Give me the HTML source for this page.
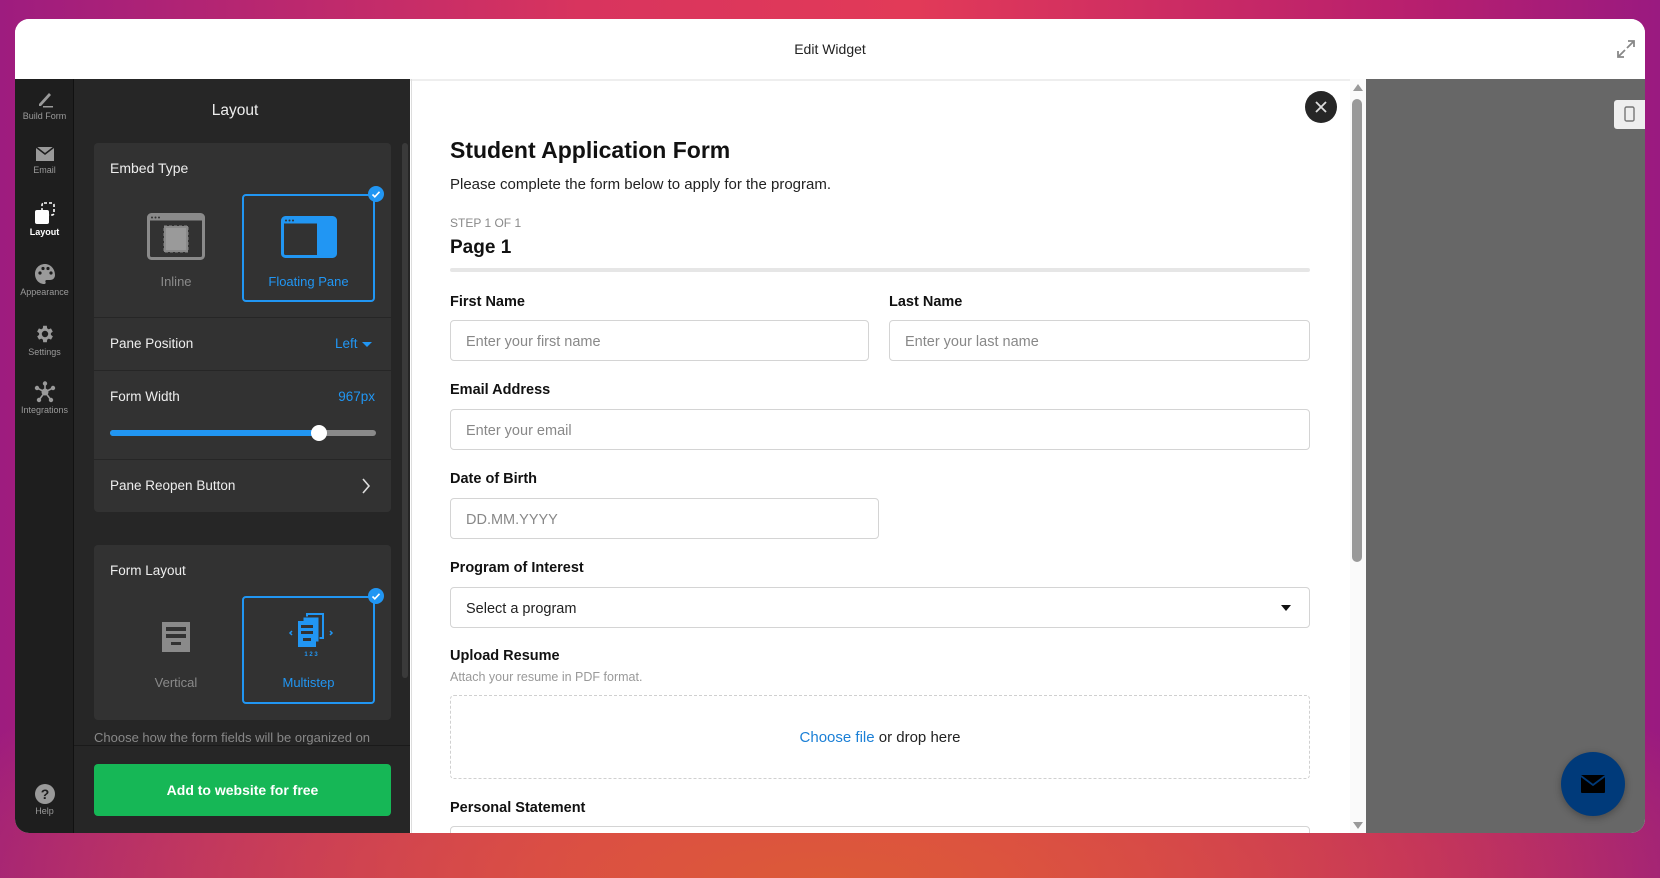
<!DOCTYPE html>
<html><head><meta charset="utf-8"><style>
*{box-sizing:border-box;margin:0;padding:0}
html,body{width:1660px;height:878px;overflow:hidden}
body{font-family:"Liberation Sans",sans-serif;position:relative;
background:radial-gradient(ellipse 60% 30% at 50% 100%,#dc5a38 0%,rgba(220,80,60,0) 100%),linear-gradient(90deg,#9e1c7f 0%,#d8345e 35%,#e23a58 55%,#b81f6e 85%,#9a1a80 100%)}
.a{position:absolute}
.win{left:15px;top:19px;width:1630px;height:814px;border-radius:14px;overflow:hidden;background:#fff}
.hdr{left:0;top:0;width:1630px;height:60px;background:#fff;text-align:center;line-height:60px;font-size:14px;color:#222}
.side{left:15px;top:79px;width:59px;height:754px;background:#1e1e1e;border-right:1px solid #111;border-bottom-left-radius:14px}
.si{position:absolute;left:0;width:59px;text-align:center;font-size:9px;color:#9a9a9a}
.panel{left:74px;top:79px;width:336px;height:754px;background:#262626}
.card{position:absolute;left:20px;width:297px;background:#323232;border-radius:4px}
.t{position:absolute;color:#eee;font-size:14px}
.opt{position:absolute;border:2px solid #2196f3;border-radius:4px}
.chk{position:absolute;width:16px;height:16px;border-radius:50%;background:#2196f3}
.div{position:absolute;left:0;width:297px;height:1px;background:#262626}
.form{left:410px;top:79px;width:956px;height:754px;background:#fff;overflow:hidden}
.lbl{position:absolute;font-weight:bold;font-size:14.5px;color:#111}
.inp{position:absolute;height:41px;border:1px solid #d4d4d4;border-radius:4px;font-size:14.5px;color:#888;padding-left:15px;line-height:43px}
</style></head><body>
<div class="a win">
 <div class="a hdr">Edit Widget</div>
 <svg class="a" style="left:1599px;top:18px" width="24" height="24" viewBox="0 0 24 24" fill="none" stroke="#888" stroke-width="1.8"><path d="M14 4h6v6M20 4l-7 7M10 20H4v-6M4 20l7-7"/></svg>
</div>
<div class="a side">
 <div class="si" style="top:10px"><svg width="20" height="20" viewBox="0 0 20 20"><path d="M4 15l10-11 2 2-10 11H4z" fill="#9a9a9a"/><rect x="8" y="17" width="10" height="1.5" fill="#9a9a9a"/></svg><div style="margin-top:0">Build Form</div></div>
 <div class="si" style="top:66px"><svg width="20" height="18" viewBox="0 0 20 18"><rect x="1" y="2" width="18" height="14" fill="#9a9a9a"/><path d="M1 2l9 7 9-7" stroke="#1e1e1e" stroke-width="1.6" fill="none"/></svg><div>Email</div></div>
 <div class="si" style="top:122px;color:#fff;font-weight:bold"><svg width="26" height="26" viewBox="0 0 26 26"><rect x="10" y="2" width="12" height="12" rx="2" fill="none" stroke="#fff" stroke-width="1.6" stroke-dasharray="3 2"/><rect x="3" y="9" width="14" height="14" rx="2" fill="#fff"/></svg><div style="margin-top:-2px">Layout</div></div>
 <div class="si" style="top:184px"><svg width="22" height="22" viewBox="0 0 22 22"><path d="M11 1C5 1 1 5.5 1 11s4 10 9 10c1.5 0 2-1 1.5-2s0-2 1.5-2h3c3 0 5-2 5-5 0-6-4.5-11-10-11z" fill="#9a9a9a"/><circle cx="6" cy="10" r="1.6" fill="#1e1e1e"/><circle cx="9" cy="5.5" r="1.6" fill="#1e1e1e"/><circle cx="14" cy="5.5" r="1.6" fill="#1e1e1e"/><circle cx="17" cy="10" r="1.6" fill="#1e1e1e"/></svg><div>Appearance</div></div>
 <div class="si" style="top:244px"><svg width="22" height="22" viewBox="0 0 24 24"><path fill="#9a9a9a" d="M19.4 13a7.5 7.5 0 000-2l2.1-1.6-2-3.5-2.5 1a7 7 0 00-1.700-1L15 3h-4l-.4 2.9a7 7 0 00-1.7 1l-2.5-1-2 3.5L6.6 11a7.5 7.5 0 000 2l-2.1 1.6 2 3.5 2.5-1a7 7 0 001.7 1L11 21h4l.4-2.9a7 7 0 001.7-1l2.5 1 2-3.5zM13 15.5A3.5 3.5 0 1113 8.5a3.5 3.5 0 010 7z" transform="translate(-1 0)"/></svg><div>Settings</div></div>
 <div class="si" style="top:302px"><svg width="22" height="22" viewBox="0 0 22 22" fill="#9a9a9a"><circle cx="11" cy="11" r="3.5"/><circle cx="11" cy="2.5" r="2.2"/><circle cx="3" cy="7" r="2.2"/><circle cx="19" cy="7" r="2.2"/><circle cx="5" cy="19" r="2.2"/><circle cx="17" cy="19" r="2.2"/><path d="M11 2.5V11M3 7l8 4M19 7l-8 4M5 19l6-8M17 19l-6-8" stroke="#9a9a9a" stroke-width="1.6"/></svg><div>Integrations</div></div>
 <div class="si" style="top:705px"><svg width="20" height="20" viewBox="0 0 20 20"><circle cx="10" cy="10" r="10" fill="#9a9a9a"/><text x="10" y="15" text-anchor="middle" font-size="14" font-weight="bold" fill="#1e1e1e" font-family="Liberation Sans">?</text></svg><div>Help</div></div>
</div>
<div class="a panel">
 <div class="t" style="left:0;width:322px;text-align:center;top:23px;font-size:15.5px">Layout</div>
 <div class="a" style="left:328px;top:64px;width:6px;height:535px;background:#3a3a3a;border-radius:3px"></div>
 <div class="card" style="top:64px;height:369px">
  <div class="t" style="left:16px;top:17px">Embed Type</div>
  <svg class="a" style="left:53px;top:70px" width="58" height="47" viewBox="0 0 58 47"><rect x="1.5" y="1.5" width="55" height="44" rx="3" fill="none" stroke="#8a8a8a" stroke-width="3"/><rect x="1.5" y="1.5" width="55" height="6" fill="#8a8a8a"/><circle cx="5" cy="4.5" r="1" fill="#323232"/><circle cx="8.5" cy="4.5" r="1" fill="#323232"/><circle cx="12" cy="4.5" r="1" fill="#323232"/><rect x="17" y="13" width="24" height="26" fill="#8a8a8a" stroke="#8a8a8a" stroke-dasharray="3 2"/><rect x="19" y="15" width="20" height="22" fill="#9a9a9a"/></svg>
  <div class="t" style="left:20px;width:124px;text-align:center;top:131px;color:#8a8a8a;font-size:13px">Inline</div>
  <div class="opt" style="left:148px;top:51px;width:133px;height:108px"></div>
  <svg class="a" style="left:187px;top:73px" width="56" height="42" viewBox="0 0 56 42"><rect x="1.5" y="1.5" width="53" height="39" rx="3" fill="none" stroke="#2196f3" stroke-width="3"/><rect x="1.5" y="1.5" width="53" height="6" fill="#2196f3"/><circle cx="5" cy="4.5" r="1" fill="#323232"/><circle cx="8.5" cy="4.5" r="1" fill="#323232"/><circle cx="12" cy="4.5" r="1" fill="#323232"/><rect x="36" y="7" width="18" height="33" fill="#2196f3"/></svg>
  <div class="t" style="left:148px;width:133px;text-align:center;top:131px;color:#2196f3;font-size:13px">Floating Pane</div>
  <div class="chk" style="left:274px;top:43px"><svg width="16" height="16" viewBox="0 0 16 16"><path d="M4.5 8.5l2.3 2.3 4.7-5" stroke="#fff" stroke-width="1.6" fill="none"/></svg></div>
  <div class="div" style="top:174px"></div>
  <div class="t" style="left:16px;top:193px;font-size:13.5px">Pane Position</div>
  <div class="t" style="left:241px;top:193px;color:#2196f3;font-size:13.5px">Left</div>
  <svg class="a" style="left:268px;top:199px" width="10" height="6"><path d="M0 0h10L5 5z" fill="#2196f3"/></svg>
  <div class="div" style="top:227px"></div>
  <div class="t" style="left:16px;top:246px;font-size:13.5px">Form Width</div>
  <div class="t" style="right:16px;top:246px;color:#2196f3;font-size:13.5px">967px</div>
  <div class="a" style="left:16px;top:287px;width:266px;height:6px;border-radius:3px;background:#8a8a8a"></div>
  <div class="a" style="left:16px;top:287px;width:209px;height:6px;border-radius:3px;background:#2196f3"></div>
  <div class="a" style="left:217px;top:282px;width:16px;height:16px;border-radius:50%;background:#fff"></div>
  <div class="div" style="top:316px"></div>
  <div class="t" style="left:16px;top:335px;font-size:13.5px">Pane Reopen Button</div>
  <svg class="a" style="left:267px;top:335px" width="10" height="16"><path d="M2 1l6 7-6 7" stroke="#ddd" stroke-width="1.6" fill="none"/></svg>
 </div>
 <div class="card" style="top:466px;height:175px">
  <div class="t" style="left:16px;top:18px;font-size:13.5px">Form Layout</div>
  <svg class="a" style="left:68px;top:77px" width="28" height="30" viewBox="0 0 28 30"><rect width="28" height="30" fill="#8a8a8a"/><rect x="4" y="5" width="20" height="4" fill="#323232"/><rect x="4" y="12" width="20" height="4" fill="#323232"/><rect x="9" y="20" width="10" height="3" fill="#323232"/></svg>
  <div class="t" style="left:20px;width:124px;text-align:center;top:130px;color:#8a8a8a;font-size:13px">Vertical</div>
  <div class="opt" style="left:148px;top:51px;width:133px;height:108px"></div>
  <svg class="a" style="left:190px;top:68px" width="54" height="44" viewBox="0 0 54 44"><rect x="23" y="1" width="16" height="24" fill="none" stroke="#2196f3" stroke-width="2"/><rect x="19" y="4" width="16" height="25" fill="#2196f3" stroke="#323232" stroke-width="1"/><rect x="14" y="8" width="18" height="26" fill="#2196f3"/><rect x="17" y="12" width="12" height="3" fill="#323232"/><rect x="17" y="18" width="12" height="3" fill="#323232"/><rect x="19" y="25" width="8" height="3" fill="#323232"/><path d="M8 18l-2 2 2 2M46 18l2 2-2 2" stroke="#2196f3" stroke-width="1.5" fill="none"/><text x="27" y="43" text-anchor="middle" font-size="6" font-weight="bold" fill="#2196f3" font-family="Liberation Sans">1 2 3</text></svg>
  <div class="t" style="left:148px;width:133px;text-align:center;top:130px;color:#2196f3;font-size:13px">Multistep</div>
  <div class="chk" style="left:274px;top:43px"><svg width="16" height="16" viewBox="0 0 16 16"><path d="M4.5 8.5l2.3 2.3 4.7-5" stroke="#fff" stroke-width="1.6" fill="none"/></svg></div>
 </div>
 <div class="t" style="left:20px;top:651px;color:#888;font-size:13px;white-space:nowrap">Choose how the form fields will be organized on</div>
 <div class="a" style="left:0;top:666px;width:336px;height:88px;background:#262626;border-top:1px solid #1a1a1a"></div>
 <div class="a" style="left:20px;top:685px;width:297px;height:52px;background:#16b756;border-radius:4px;color:#fff;font-weight:bold;font-size:14px;text-align:center;line-height:52px">Add to website for free</div>
</div>
<div class="a form">
 <div class="a" style="left:0;top:0;width:956px;height:2px;background:#eee"></div>
 <div class="a" style="left:1px;top:0;width:1px;height:754px;background:#ddd"></div>
 <div class="a" style="left:895px;top:12px;width:32px;height:32px;border-radius:50%;background:#262626"><svg width="32" height="32"><path d="M11 11l10 10M21 11L11 21" stroke="#ddd" stroke-width="1.8"/></svg></div>
 <div class="a" style="left:940px;top:0;width:16px;height:754px;background:#fafafa"></div>
 <svg class="a" style="left:943px;top:5px" width="10" height="7"><path d="M0 7L5 0l5 7z" fill="#999"/></svg>
 <div class="a" style="left:942px;top:20px;width:10px;height:463px;background:#999;border-radius:5px"></div>
 <svg class="a" style="left:943px;top:743px" width="10" height="7"><path d="M0 0h10L5 7z" fill="#999"/></svg>
 <div class="a" style="left:40px;top:58px;font-size:23px;font-weight:bold;color:#111">Student Application Form</div>
 <div class="a" style="left:40px;top:97px;font-size:15px;color:#222">Please complete the form below to apply for the program.</div>
 <div class="a" style="left:40px;top:137px;font-size:12px;color:#888">STEP 1 OF 1</div>
 <div class="a" style="left:40px;top:158px;font-size:19px;font-weight:bold;color:#111">Page 1</div>
 <div class="a" style="left:40px;top:189px;width:860px;height:4px;background:#e6e6e6;border-radius:2px"></div>
 <div class="lbl" style="left:40px;top:215px">First Name</div>
 <div class="lbl" style="left:479px;top:215px">Last Name</div>
 <div class="inp" style="left:40px;top:241px;width:419px">Enter your first name</div>
 <div class="inp" style="left:479px;top:241px;width:421px">Enter your last name</div>
 <div class="lbl" style="left:40px;top:303px">Email Address</div>
 <div class="inp" style="left:40px;top:330px;width:860px">Enter your email</div>
 <div class="lbl" style="left:40px;top:392px">Date of Birth</div>
 <div class="inp" style="left:40px;top:419px;width:429px">DD.MM.YYYY</div>
 <div class="lbl" style="left:40px;top:481px">Program of Interest</div>
 <div class="inp" style="left:40px;top:508px;width:860px;color:#222">Select a program<svg style="position:absolute;right:18px;top:17px" width="10" height="6"><path d="M0 0h10L5 6z" fill="#111"/></svg></div>
 <div class="lbl" style="left:40px;top:569px">Upload Resume</div>
 <div class="a" style="left:40px;top:591px;font-size:12.5px;color:#999">Attach your resume in PDF format.</div>
 <div class="a" style="left:40px;top:616px;width:860px;height:84px;border:1px dashed #d0d0d0;border-radius:4px;text-align:center;line-height:84px;font-size:15px;color:#222"><span style="color:#1a7fd6">Choose file</span> or drop here</div>
 <div class="lbl" style="left:40px;top:721px">Personal Statement</div>
 <div class="a" style="left:40px;top:747px;width:860px;height:40px;border:1px solid #d4d4d4;border-radius:4px"></div>
</div>
<div class="a" style="left:1366px;top:79px;width:279px;height:754px;background:#676767;border-bottom-right-radius:14px"></div>
<div class="a" style="left:1614px;top:100px;width:31px;height:29px;background:#eee;border-radius:3px 0 0 3px"><svg width="31" height="29"><rect x="11" y="7" width="9" height="14" rx="1.5" fill="none" stroke="#777" stroke-width="1.4"/></svg></div>
<div class="a" style="left:1561px;top:752px;width:64px;height:64px;border-radius:50%;background:#003a7a;box-shadow:0 2px 8px rgba(0,0,0,.3)"><svg width="64" height="64"><rect x="20" y="23" width="24" height="18" rx="1" fill="#000"/><path d="M20 24l12 9 12-9" stroke="#003a7a" stroke-width="1.8" fill="none"/></svg></div>
</body></html>
